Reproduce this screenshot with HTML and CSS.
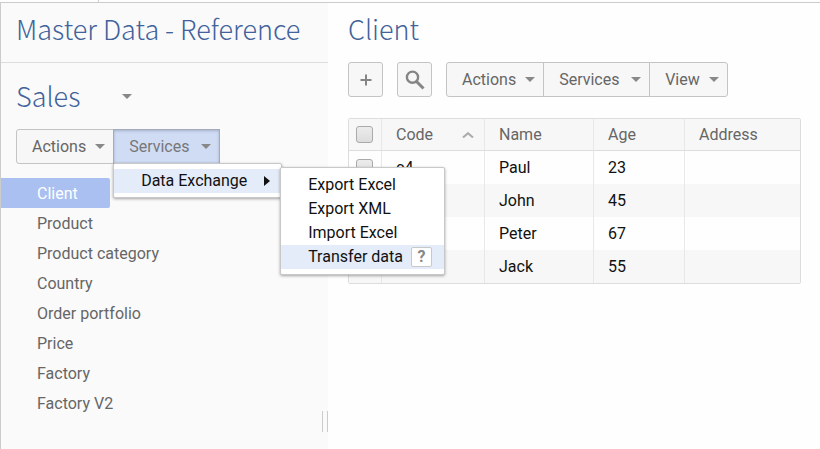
FILE: index.html
```html
<!DOCTYPE html>
<html lang="en">
<head>
<meta charset="utf-8">
<title>Master Data - Reference</title>
<link rel="stylesheet" href="styles.css">
</head>
<body>
<div class="top-strip"></div>
<div class="app">
  <aside class="sidebar">
    <h1 class="heading sidebar-title">Master Data - Reference</h1>
    <button class="heading domain" type="button">Sales <span class="caret"></span></button>
    <div class="button-group sidebar-tools">
      <button class="btn" type="button">Actions <span class="caret"></span></button>
      <div class="menu-anchor">
        <button class="btn btn-wide btn-open" type="button" aria-expanded="true">Services <span class="caret"></span></button>
        <div class="menu">
          <button class="menu-item active" type="button">Data Exchange <span class="arrow"></span></button>
          <div class="menu submenu">
            <button class="menu-item" type="button">Export Excel</button>
            <button class="menu-item" type="button">Export XML</button>
            <button class="menu-item" type="button">Import Excel</button>
            <button class="menu-item active" type="button">Transfer data <span class="help">?</span></button>
          </div>
        </div>
      </div>
    </div>
    <nav class="nav">
      <a class="selected" href="#client">Client</a>
      <a href="#product">Product</a>
      <a href="#category">Product category</a>
      <a href="#country">Country</a>
      <a href="#orders">Order portfolio</a>
      <a href="#price">Price</a>
      <a href="#factory">Factory</a>
      <a href="#factory2">Factory V2</a>
    </nav>
    <div class="grip"></div>
  </aside>
  <main class="content">
    <h2 class="heading content-title">Client</h2>
    <div class="toolbar">
      <button class="btn btn-icon" type="button" aria-label="Add">
        <svg width="12" height="12" viewBox="0 0 12 12"><path d="M6 .5v11M.5 6h11" stroke="#858585" stroke-width="2" fill="none"/></svg>
      </button>
      <button class="btn btn-icon" type="button" aria-label="Search">
        <svg width="20" height="20" viewBox="0 0 20 20"><circle cx="7.5" cy="7.2" r="5.6" stroke="#858585" stroke-width="2.4" fill="none"/><path d="M11.5 11.5l7 7" stroke="#858585" stroke-width="3" fill="none"/></svg>
      </button>
      <div class="button-group">
        <button class="btn" type="button">Actions <span class="caret"></span></button>
        <button class="btn btn-wide" type="button">Services <span class="caret"></span></button>
        <button class="btn" type="button">View <span class="caret"></span></button>
      </div>
    </div>
    <table class="grid">
      <colgroup><col class="col-check"><col class="col-code"><col class="col-name"><col class="col-age"><col></colgroup>
      <thead>
        <tr>
          <th class="check"><input type="checkbox" aria-label="Select all"></th>
          <th><span class="sort">Code <svg width="12" height="6" viewBox="0 0 12 6"><path d="M1 5.5L6 1.2l5 4.3" stroke="#aaa" stroke-width="2" fill="none"/></svg></span></th>
          <th>Name</th><th>Age</th><th>Address</th>
        </tr>
      </thead>
      <tbody>
        <tr><td class="check"><input type="checkbox" aria-label="Select Paul"></td><td>c4</td><td>Paul</td><td>23</td><td></td></tr>
        <tr><td class="check"><input type="checkbox" aria-label="Select John"></td><td></td><td>John</td><td>45</td><td></td></tr>
        <tr><td class="check"><input type="checkbox" aria-label="Select Peter"></td><td></td><td>Peter</td><td>67</td><td></td></tr>
        <tr><td class="check"><input type="checkbox" aria-label="Select Jack"></td><td></td><td>Jack</td><td>55</td><td></td></tr>
      </tbody>
    </table>
  </main>
</div>
</body>
</html>
```
FILE: styles.css
```css
* { box-sizing: border-box; }

body {
  margin: 0;
  min-height: 100vh;
  display: flex;
  flex-direction: column;
  background: #fefefe;
  color: #666;
  font: 16px/20px Roboto, "Liberation Sans", sans-serif;
}

button { font: inherit; color: inherit; margin: 0; white-space: nowrap; }

.top-strip {
  height: 3px;
  border-bottom: 1px solid #ccc;
  background: linear-gradient(#ccc, #ccc) 98px 0 / 1px 100% no-repeat;
}

.app { flex: 1; display: flex; }

.sidebar {
  position: relative;
  flex: 0 0 328px;
  background: #fafafa;
  border-left: 1px solid #ccc;
}

.heading {
  margin: 0;
  font: 300 27px/40px "Noto Sans CJK SC", "Open Sans", sans-serif;
  color: #41629a;
}

.sidebar-title {
  height: 60px;
  padding: 6px 15px;
  border-bottom: 1px solid #ddd;
  white-space: nowrap;
}

.domain {
  display: flex;
  align-items: center;
  gap: 42px;
  height: 40px;
  margin-top: 13px;
  padding: 0 15px;
  border: 0;
  background: none;
}

.caret {
  border: 5px solid transparent;
  border-top-color: #888;
  border-bottom: 0;
}

.button-group { display: flex; }
.sidebar-tools { margin: 13px 0 0 15px; }

.btn {
  display: flex;
  align-items: center;
  gap: 9px;
  height: 35px;
  padding: 0 15px;
  border: 1px solid #c4c4c4;
  background: #f7f7f7;
}
.btn:first-child { border-radius: 3px 0 0 3px; }
.btn:last-child { border-radius: 0 3px 3px 0; }
.button-group > .btn + .btn, .menu-anchor { margin-left: -1px; }
.button-group > .btn, .btn.btn-open { padding-right: 8px; }
.btn-wide { min-width: 107px; justify-content: space-between; }

.btn.btn-icon {
  width: 35px;
  padding: 0;
  justify-content: center;
  border-radius: 3px;
}

.menu-anchor { position: relative; }
.btn.btn-open {
  background: #d0dcf4;
  border-color: #a4acbc;
  border-radius: 0;
  box-shadow: inset 0 1px 3px #a4b0c8;
  color: #777;
}

.menu {
  position: absolute;
  z-index: 2;
  top: 34px;
  left: 0;
  width: 169px;
  padding: 5px 0 4px;
  background: #fff;
  border: 1px solid #c8c8c8;
  border-radius: 2px;
  box-shadow: 0 1px 3px rgba(0, 0, 0, .35);
}

.submenu { top: 3px; left: 166px; width: 165px; padding-bottom: 5px; }

.menu-item {
  display: flex;
  align-items: center;
  width: 100%;
  height: 24px;
  padding: 0 0 0 27px;
  border: 0;
  background: none;
  color: #111;
}
.menu-item.active { background: #e4ebf9; }

.arrow {
  margin-left: 17px;
  border: 5px solid transparent;
  border-left: 6px solid #111;
  border-right: 0;
}

.help {
  width: 21px;
  margin-left: 8px;
  border: 1px solid #c8c8c8;
  border-radius: 2px;
  background: #fff;
  color: #888;
  font-weight: 700;
  line-height: 18px;
  text-align: center;
}

.nav {
  display: flex;
  flex-direction: column;
  align-items: flex-start;
  margin-top: 14px;
}
.nav a {
  width: 109px;
  padding: 6px 0 4px 36px;
  color: inherit;
  text-decoration: none;
  white-space: nowrap;
}
.nav .selected { background: #a9c0f0; color: #fff; border-radius: 0 2px 2px 0; }

.grip {
  position: absolute;
  right: 0;
  bottom: 17px;
  width: 6px;
  height: 21px;
  border: solid #ccc;
  border-width: 0 1px;
}

.content { flex: 1; min-width: 0; padding: 6px 19px 0 20px; }

.toolbar { display: flex; gap: 14px; margin-top: 13px; }

.grid {
  width: 100%;
  margin-top: 21px;
  table-layout: fixed;
  border-spacing: 0;
  border: 1px solid #ddd;
  border-radius: 2px;
}
.col-check { width: 33px; }
.col-code { width: 103px; }
.col-name { width: 109px; }
.col-age { width: 91px; }

.grid th, .grid td {
  height: 33px;
  padding: 0 14px;
  border-right: 1px solid #e8e8e8;
  font-weight: 400;
  text-align: left;
}
.grid th { height: 32px; background: #f7f7f7; border-bottom: 1px solid #ddd; }
.grid td { color: #111; }
.grid th:last-child, .grid td:last-child { border-right: 0; }
.grid tbody tr:nth-child(even) { background: #f7f7f7; }
.grid .check { padding: 0 0 0 7px; }

.sort { display: flex; align-items: center; justify-content: space-between; margin-right: -4px; }

input[type="checkbox"] {
  appearance: none;
  display: block;
  width: 17px;
  height: 17px;
  margin: 0;
  border: 1px solid #aaa;
  border-radius: 3px;
  background: linear-gradient(#ececec, #ddd);
}
```
